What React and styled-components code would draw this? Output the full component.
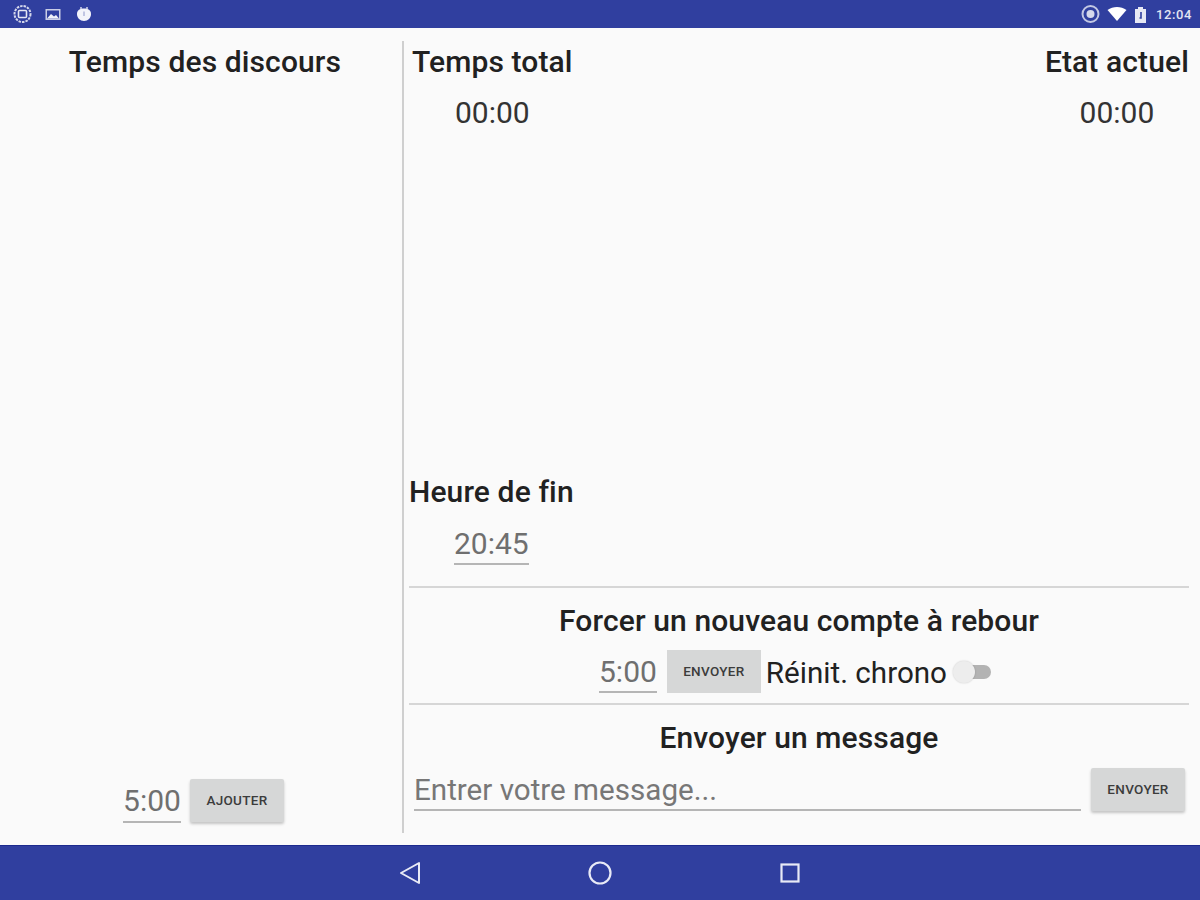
import React from 'react';
import styled, { createGlobalStyle } from 'styled-components';

const Global = createGlobalStyle`
  html, body { margin: 0; padding: 0; background: #fafafa; }
  body { font-family: Roboto, "Noto Sans", sans-serif; color: #212121; }
`;
const Screen = styled.div`
  width: 1200px; height: 900px; display: flex; flex-direction: column; overflow: hidden; background: #fafafa;
`;
const StatusBar = styled.div`
  height: 28px; flex: none; background: #303f9f; display: flex; align-items: center; justify-content: space-between; padding: 0 8px 0 12px; box-sizing: border-box;
`;
const StatusGroup = styled.div`
  display: flex; align-items: center; gap: ${p => p.$gap}px;
`;
const Clock = styled.span`
  font-size: 13px; font-weight: 500; color: #e3e5f2; letter-spacing: .6px; margin-left: 2px;
`;
const Main = styled.div`
  flex: 1; min-height: 0; display: flex; padding: 13px 11px 12px 0; box-sizing: border-box;
`;
const Left = styled.section`
  width: 402px; flex: none; box-sizing: border-box; padding-left: 8px; display: flex; flex-direction: column; align-items: center; justify-content: space-between;
`;
const Rule = styled.div`
  width: 2px; flex: none; background: #cfcfcf;
`;
const Right = styled.section`
  flex: 1; min-width: 0; margin-left: 5px; display: flex; flex-direction: column;
`;
const Heading = styled.h2`
  margin: 0; font-size: 30px; line-height: 42px; font-weight: 500; color: #212121; letter-spacing: .12px;
  font-variant-ligatures: none;
  text-align: ${p => p.$align || 'left'};
`;
const TopRow = styled.div`
  display: flex; justify-content: space-between; padding-left: 3px;
`;
const TimeBlock = styled.div`
  display: flex; flex-direction: column;
`;
const Time = styled.div`
  font-size: 30px; line-height: 36px; margin-top: 12px; text-align: center; color: #333;
`;
const Grow = styled.div`flex: 1;`;
const EndBlock = styled.div`
  padding-bottom: 21px;
`;
const FieldValue = styled.div`
  display: inline-block; font-size: 30px; line-height: ${p => p.$h || 42}px; height: ${p => p.$h || 42}px; box-sizing: border-box; color: #6f6f6f;
  border-bottom: 2px solid #b5b5b5;
  margin-left: ${p => p.$ml || 0}px;
`;
const EndValue = styled.div`
  margin-top: 10px;
`;
const Section = styled.div`
  border-top: 2px solid #d6d6d6; padding-top: 12px; padding-bottom: ${p => p.$pb || 0}px;
`;
const CountdownSection = styled(Section)`
  height: 117px; box-sizing: border-box;
`;
const Row = styled.div`
  display: flex; align-items: flex-start; justify-content: center; height: 43px; margin-top: 8px; padding-right: 8px;
`;
const Btn = styled.button`
  width: 94px; height: 43px; border: 0; padding: 0 0 1px; margin: 0 0 0 ${p => p.$ml || 0}px; font-family: Roboto, sans-serif; font-size: 13.5px; font-weight: 500; letter-spacing: .3px; color: #3c3c3c;
  background: #d6d7d7; border-radius: ${p => p.$flat ? 0 : 2}px; box-shadow: ${p => p.$flat ? 'none' : '0 2px 3px rgba(0,0,0,.22)'};
`;
const Label = styled.span`
  color: #212121; font-size: 29.6px; line-height: 46px; margin-left: 5px;
`;
const Switch = styled.div`
  position: relative; width: 35px; height: 14px; border-radius: 7px; background: #b3b3b3; margin: 15px 0 0 9px; flex: none;
  &::after { content: ""; position: absolute; left: -3px; top: -4px; width: 22px; height: 22px; border-radius: 50%; background: #ededed; box-shadow: 0 0 2px rgba(0,0,0,.2); }
`;
const AddRow = styled.div`
  display: flex; align-items: flex-start; gap: 9px; height: 45px; margin-bottom: 9px; margin-left: -3px;
`;
const MsgRow = styled.div`
  display: flex; align-items: flex-end; gap: 10px; margin-top: 9px; padding-left: 5px; padding-right: 4px;
`;
const MsgInput = styled.div`
  flex: 1; height: 43px; box-sizing: border-box; font-size: 29.6px; line-height: 44px; color: #777; border-bottom: 2px solid #b5b5b5;
`;
const NavBar = styled.nav`
  height: 55px; flex: none; background: #303f9f; border-top: 1px solid #1c2a8e; box-sizing: border-box; display: flex; align-items: center; justify-content: center; gap: 168px;
`;

const Icon = ({ w, h, children }) => (
  <svg width={w} height={h} viewBox={`0 0 ${w} ${h}`} fill="none">{children}</svg>
);

export default function App() {
  return (
    <Screen>
      <Global />
      <StatusBar>
        <StatusGroup $gap={12}>
          <Icon w={21} h={18}>
            <circle cx="10.5" cy="9" r="8" stroke="#d5d8ec" strokeWidth="2" strokeDasharray="2.5 1" />
            <rect x="6.5" y="5.5" width="8" height="7" rx="1" stroke="#e3e5f2" strokeWidth="1.6" />
          </Icon>
          <Icon w={16} h={13}>
            <rect x="0.5" y="1" width="15" height="11" fill="#c9cde6" />
            <rect x="2" y="2.5" width="12" height="8" fill="#303f9f" />
            <path d="M2 10.5 L6 6 L9 8.5 L11 7 L14 10.5Z" fill="#f0f1f8" />
          </Icon>
          <Icon w={19} h={16}>
            <g transform="translate(3,0)">
              <path d="M1 8C1 4 4 2.500 8 2.500s7 1.500 7 5.500-3 7-7 7-7-3-7-7z" fill="#f2f3fa" />
              <path d="M5 3V1M11 3V1" stroke="#d5d8ec" strokeWidth="1.500" />
              <rect x="7" y="5.500" width="2" height="4.500" fill="#c0c5e2" />
            </g>
          </Icon>
        </StatusGroup>
        <StatusGroup $gap={7}>
          <Icon w={19} h={18}>
            <circle cx="9.500" cy="9" r="8" stroke="#c3c8e4" strokeWidth="2" />
            <circle cx="9.500" cy="9" r="4" fill="#d5d8ec" />
          </Icon>
          <Icon w={20} h={14}>
            <path d="M0.500 3C6 -1 14 -1 19.500 3L10 14Z" fill="#ffffff" />
          </Icon>
          <Icon w={13} h={18}>
            <path d="M1 4h3V2h5v2h3v14H1z" fill="#e6e8f4" />
            <path d="M7 7v6H5.500" stroke="#303f9f" strokeWidth="1.600" />
          </Icon>
          <Clock>12:04</Clock>
        </StatusGroup>
      </StatusBar>
      <Main>
        <Left>
          <Heading $align="center">Temps des discours</Heading>
          <AddRow>
            <FieldValue $h={44}>5:00</FieldValue>
            <Btn>AJOUTER</Btn>
          </AddRow>
        </Left>
        <Rule />
        <Right>
          <TopRow>
            <TimeBlock>
              <Heading>Temps total</Heading>
              <Time>00:00</Time>
            </TimeBlock>
            <TimeBlock>
              <Heading $align="right">Etat actuel</Heading>
              <Time>00:00</Time>
            </TimeBlock>
          </TopRow>
          <Grow />
          <EndBlock>
            <Heading>Heure de fin</Heading>
            <EndValue><FieldValue $ml={45}>20:45</FieldValue></EndValue>
          </EndBlock>
          <CountdownSection>
            <Heading $align="center">Forcer un nouveau compte à rebour</Heading>
            <Row>
              <FieldValue $h={43}>5:00</FieldValue>
              <Btn $flat $ml={10}>ENVOYER</Btn>
              <Label>Réinit. chrono</Label>
              <Switch />
            </Row>
          </CountdownSection>
          <Section $pb={22}>
            <Heading $align="center">Envoyer un message</Heading>
            <MsgRow>
              <MsgInput>Entrer votre message...</MsgInput>
              <Btn>ENVOYER</Btn>
            </MsgRow>
          </Section>
        </Right>
      </Main>
      <NavBar>
        <Icon w={20} h={24}>
          <path d="M19 2V22L1 12Z" stroke="#e8eaf6" strokeWidth="2" strokeLinejoin="round" />
        </Icon>
        <Icon w={24} h={24}>
          <circle cx="12" cy="12" r="10.500" stroke="#e8eaf6" strokeWidth="2.200" />
        </Icon>
        <Icon w={20} h={20}>
          <rect x="1.500" y="1.500" width="17" height="17" stroke="#e8eaf6" strokeWidth="2.200" />
        </Icon>
      </NavBar>
    </Screen>
  );
}
